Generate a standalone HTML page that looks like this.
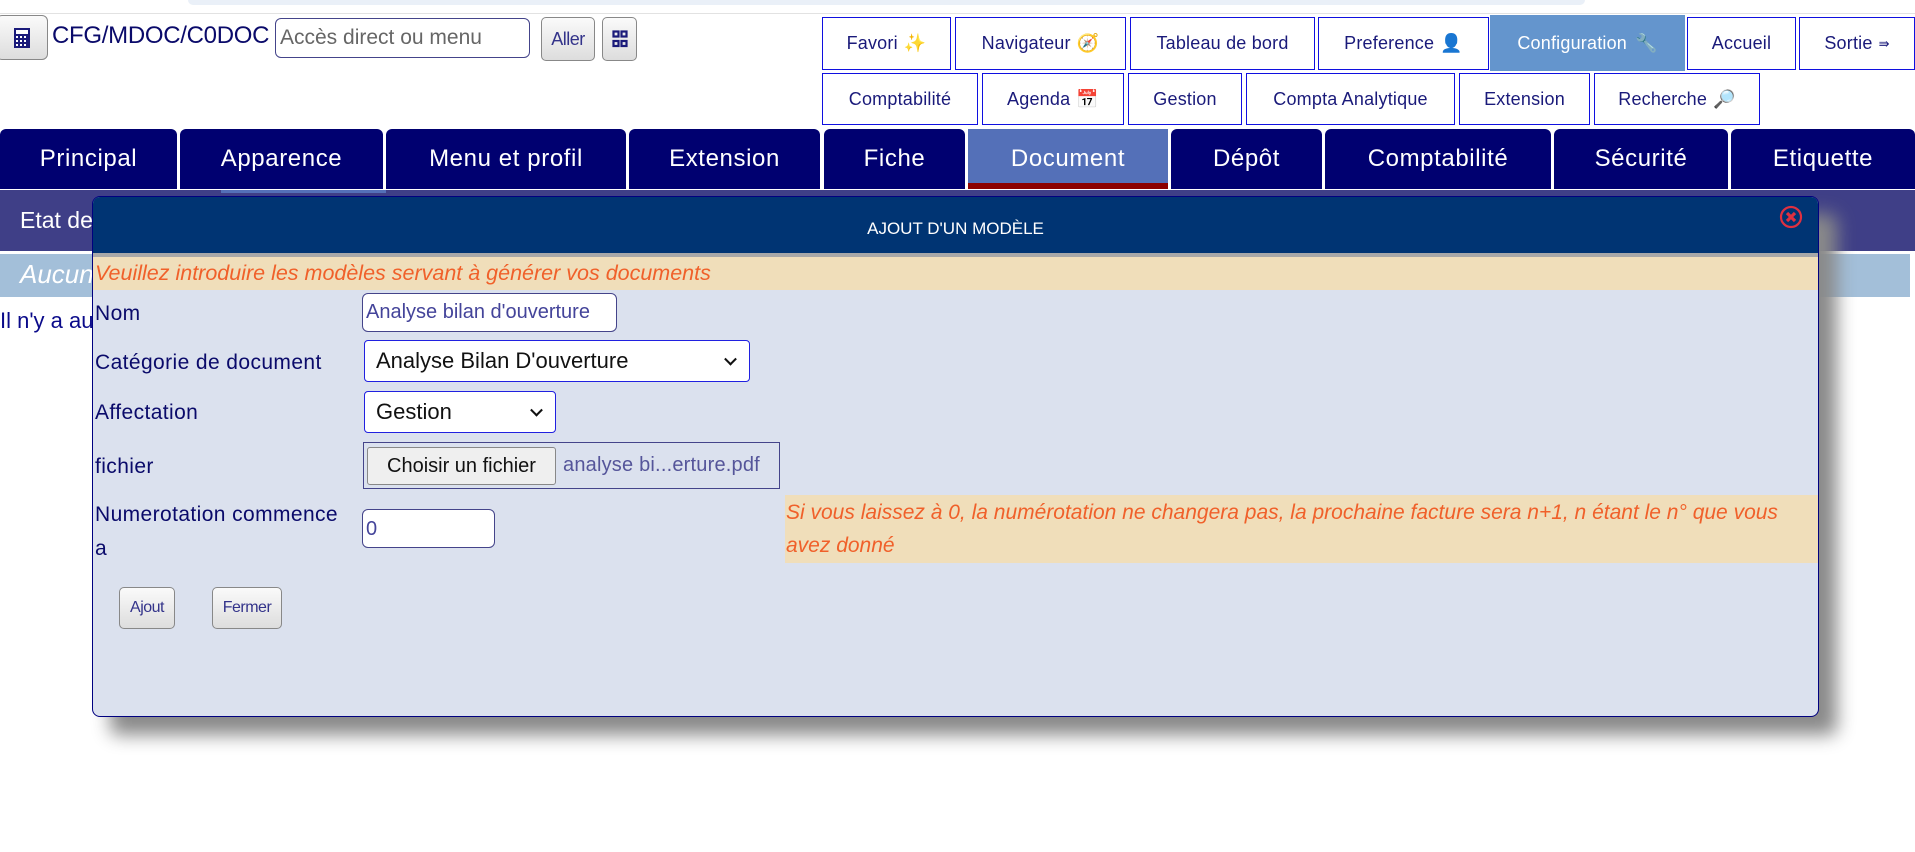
<!DOCTYPE html>
<html><head><meta charset="utf-8"><style>
*{box-sizing:border-box;margin:0;padding:0}
body{width:1915px;height:852px;overflow:hidden;background:#fff;font-family:"Liberation Sans",sans-serif;position:relative}
.a{position:absolute}
.tb{position:absolute;border:1px solid #1010e0;background:#fff;color:#1a1a7a;font-size:18px;letter-spacing:0.2px;display:flex;align-items:center;justify-content:center;white-space:nowrap}
.tab{position:absolute;top:129px;height:60px;background:#000070;color:#fff;font-size:24px;letter-spacing:0.6px;display:flex;align-items:center;justify-content:center;border-radius:6px 6px 0 0}
.lbl{position:absolute;left:95px;color:#0a0a6a;font-size:21px;letter-spacing:0.4px}
.btn{position:absolute;border:1px solid #888;border-radius:5px;background:linear-gradient(#fafafa,#ddd);color:#33338a;font-size:16px;display:flex;align-items:center;justify-content:center;letter-spacing:-0.5px}
.sel{position:absolute;border:1px solid #2020e0;border-radius:4px;background:#fff;color:#111;font-size:22px;display:flex;align-items:center;padding-left:11px}
.sel:after{content:"";position:absolute;right:14px;top:50%;width:7px;height:7px;border-right:2px solid #111;border-bottom:2px solid #111;transform:translateY(-70%) rotate(45deg)}
</style></head><body>
<div class="a" style="left:188px;top:0;width:1397px;height:5px;background:#eaf0f8;border-radius:0 0 8px 8px"></div>
<div class="a" style="left:0;top:13px;width:1915px;height:1px;background:#e2e2e2"></div>

<div class="btn" style="left:-4px;top:15px;width:52px;height:45px;border-radius:6px">
<svg width="18" height="22" viewBox="0 0 18 22"><rect x="1" y="1" width="16" height="20" fill="#1a1a7a"/><rect x="3" y="3" width="12" height="4" fill="#fff"/><g fill="#fff"><rect x="3" y="9" width="2" height="2"/><rect x="7" y="9" width="2" height="2"/><rect x="11" y="9" width="2" height="2"/><rect x="3" y="13" width="2" height="2"/><rect x="7" y="13" width="2" height="2"/><rect x="11" y="13" width="2" height="2"/><rect x="3" y="17" width="2" height="2"/><rect x="7" y="17" width="2" height="2"/><rect x="11" y="17" width="2" height="2"/></g></svg></div>
<div class="a" style="left:52px;top:22px;font-size:24px;color:#0a0a6a;letter-spacing:-0.3px">CFG/MDOC/C0DOC</div>
<div class="a" style="left:275px;top:18px;width:255px;height:40px;border:1px solid #44448a;border-radius:6px;color:#666;font-size:21px;padding:7px 4px">Accès direct ou menu</div>
<div class="btn" style="left:541px;top:17px;width:54px;height:44px;font-size:18px">Aller</div>
<div class="btn" style="left:602px;top:17px;width:35px;height:44px"><svg width="16" height="18" viewBox="0 0 16 18"><g fill="none" stroke="#1a1a7a" stroke-width="2.2"><rect x="1.5" y="1.5" width="5" height="5"/><rect x="9.5" y="1.5" width="5" height="5"/><rect x="1.5" y="11" width="5" height="5"/><rect x="9.5" y="11" width="5" height="5"/></g></svg></div>

<div class="tb" style="left:822px;top:17px;width:129px;height:53px">Favori <span style="color:#f5b030;margin-left:6px">✨</span></div>
<div class="tb" style="left:955px;top:17px;width:171px;height:53px">Navigateur <span style="color:#d08030;margin-left:6px">🧭</span></div>
<div class="tb" style="left:1130px;top:17px;width:185px;height:53px">Tableau de bord</div>
<div class="tb" style="left:1318px;top:17px;width:171px;height:53px">Preference <span style="color:#402060;margin-left:6px">👤</span></div>
<div class="tb" style="left:1490px;top:15px;width:195px;height:56px;background:#6495cd;border-color:#6495cd;color:#fff">Configuration <span style="margin-left:8px;color:#ccc">🔧</span></div>
<div class="tb" style="left:1687px;top:17px;width:109px;height:53px">Accueil</div>
<div class="tb" style="left:1799px;top:17px;width:116px;height:53px">Sortie <span style="margin-left:6px;font-size:13px">⇛</span></div>

<div class="tb" style="left:822px;top:73px;width:156px;height:52px">Comptabilité</div>
<div class="tb" style="left:982px;top:73px;width:142px;height:52px">Agenda <span style="color:#6080d0;margin-left:6px">📅</span></div>
<div class="tb" style="left:1128px;top:73px;width:114px;height:52px">Gestion</div>
<div class="tb" style="left:1246px;top:73px;width:209px;height:52px">Compta Analytique</div>
<div class="tb" style="left:1459px;top:73px;width:131px;height:52px">Extension</div>
<div class="tb" style="left:1594px;top:73px;width:166px;height:52px">Recherche <span style="color:#3090d0;margin-left:6px">🔎</span></div>

<div class="tab" style="left:0;width:177px">Principal</div>
<div class="tab" style="left:180px;width:203px">Apparence</div>
<div class="tab" style="left:386px;width:240px">Menu et profil</div>
<div class="tab" style="left:629px;width:191px">Extension</div>
<div class="tab" style="left:824px;width:141px">Fiche</div>
<div class="tab" style="left:968px;width:200px;background:#5470b8;border-bottom:6px solid #8b0000;border-radius:0;padding-top:6px">Document</div>
<div class="tab" style="left:1171px;width:151px">Dépôt</div>
<div class="tab" style="left:1325px;width:226px">Comptabilité</div>
<div class="tab" style="left:1554px;width:174px">Sécurité</div>
<div class="tab" style="left:1731px;width:184px">Etiquette</div>

<div class="a" style="left:0;top:190px;width:1915px;height:61px;background:#3f3f87"></div>
<div class="a" style="left:221px;top:190px;width:165px;height:3px;background:#5470b8"></div>
<div class="a" style="left:20px;top:207px;color:#fff;font-size:23px">Etat de</div>
<div class="a" style="left:0;top:254px;width:1910px;height:43px;background:#a3bfd9"></div>
<div class="a" style="left:20px;top:259px;color:#fff;font-size:26px;font-style:italic">Aucun</div>
<div class="a" style="left:0;top:308px;color:#0a0a8a;font-size:22px">Il n'y a au</div>

<div class="a" style="left:92px;top:196px;width:1727px;height:521px;background:#dbe1ee;border:1px solid #000080;border-radius:8px;box-shadow:18px 18px 18px #8a8a8a;overflow:hidden">
 <div class="a" style="left:0;top:0;width:100%;height:56px;background:#003473;color:#fff;font-size:17px;text-align:center;line-height:64px">AJOUT D'UN MODÈLE</div>
 <svg class="a" style="left:1686px;top:8px" width="24" height="24" viewBox="0 0 24 24"><circle cx="12" cy="12" r="10" fill="none" stroke="#e03040" stroke-width="2.2"/><path d="M8 8L16 16M16 8L8 16" stroke="#e03040" stroke-width="3.2"/></svg>
 <div class="a" style="left:0;top:56px;width:100%;height:4px;background:#a8a8a8"></div>
 <div class="a" style="left:0;top:60px;width:100%;height:33px;background:#f0deba;color:#f0602a;font-style:italic;font-size:21.5px;padding:4px 2px">Veuillez introduire les modèles servant à générer vos documents</div>
</div>

<div class="lbl" style="top:302px">Nom</div>
<div class="a" style="left:362px;top:293px;width:255px;height:39px;border:1px solid #44448a;border-radius:6px;background:#fff;color:#44449a;font-size:20px;padding:7px 3px;white-space:nowrap;overflow:hidden">Analyse bilan d'ouverture</div>
<div class="lbl" style="top:351px">Catégorie de document</div>
<div class="sel" style="left:364px;top:340px;width:386px;height:42px">Analyse Bilan D'ouverture</div>
<div class="lbl" style="top:401px">Affectation</div>
<div class="sel" style="left:364px;top:391px;width:192px;height:42px">Gestion</div>
<div class="lbl" style="top:455px">fichier</div>
<div class="a" style="left:363px;top:442px;width:417px;height:47px;border:1px solid #44448a"></div>
<div class="a" style="left:367px;top:447px;width:189px;height:38px;border:1px solid #888;border-radius:3px;background:#efefef;color:#111;font-size:20px;display:flex;align-items:center;justify-content:center">Choisir un fichier</div>
<div class="a" style="left:563px;top:454px;color:#55559a;font-size:20px;letter-spacing:0.2px">analyse bi...erture.pdf</div>
<div class="lbl" style="top:498px;line-height:34px">Numerotation commence<br>a</div>
<div class="a" style="left:362px;top:509px;width:133px;height:39px;border:1px solid #44448a;border-radius:6px;background:#fff;color:#44449a;font-size:20px;padding:8px 3px">0</div>
<div class="a" style="left:785px;top:495px;width:1033px;height:68px;background:#f0deba;color:#f0602a;font-style:italic;font-size:21px;line-height:33px;padding:1px 1px;white-space:nowrap">Si vous laissez à 0, la numérotation ne changera pas, la prochaine facture sera n+1, n étant le n° que vous<br>avez donné</div>
<div class="btn" style="left:119px;top:587px;width:56px;height:42px">Ajout</div>
<div class="btn" style="left:212px;top:587px;width:70px;height:42px">Fermer</div>
</body></html>
